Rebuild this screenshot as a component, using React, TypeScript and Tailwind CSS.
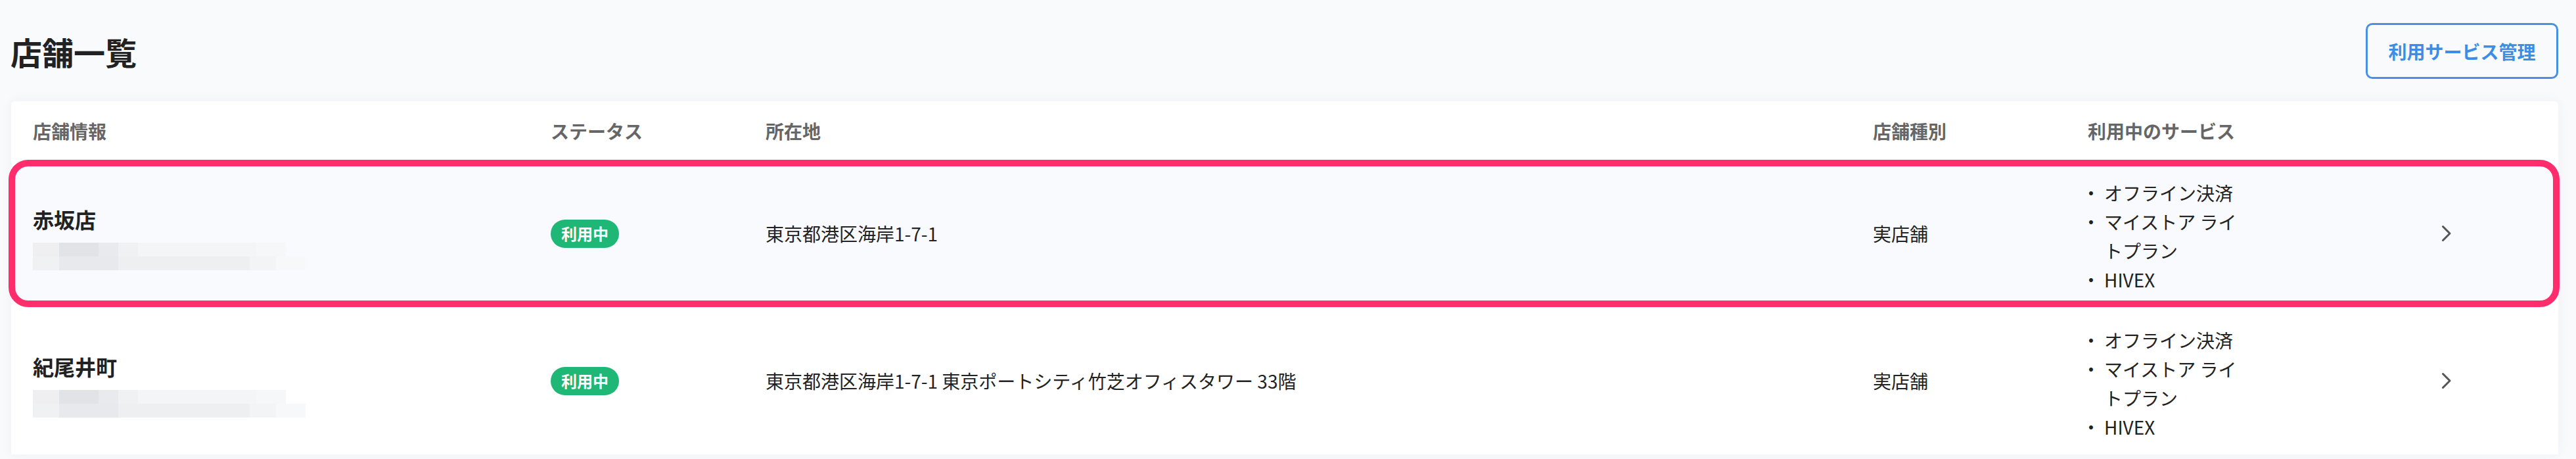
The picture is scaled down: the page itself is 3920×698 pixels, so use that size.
import React from "react";

type Store = {
  name: string;
  address: string;
  type: string;
  services: string[];
  selected: boolean;
};

const stores: Store[] = [
  {
    name: "赤坂店",
    address: "東京都港区海岸1-7-1",
    type: "実店舗",
    services: ["オフライン決済", "マイストア ライトプラン", "HIVEX"],
    selected: true,
  },
  {
    name: "紀尾井町",
    address: "東京都港区海岸1-7-1 東京ポートシティ竹芝オフィスタワー 33階",
    type: "実店舗",
    services: ["オフライン決済", "マイストア ライトプラン", "HIVEX"],
    selected: false,
  },
];

const cols =
  "grid grid-cols-[788px_327px_1685px_327px_538px_1fr] items-center pl-[33px]";

// pixelated (masked) sub text under the store name
const mosaicTop = [
  "w-[40px] bg-[#efeff2]",
  "w-[60px] bg-[#e2e3e6]",
  "w-[30px] bg-[#e9eaed]",
  "w-[30px] bg-[#f0f1f3]",
  "w-[180px] bg-[#f4f5f7]",
  "w-[45px] bg-[#f6f7f9]",
];
const mosaicBottom = [
  "w-[40px] bg-[#f0f1f3]",
  "w-[90px] bg-[#e8e9ec]",
  "w-[200px] bg-[#eeeff1]",
  "w-[40px] bg-[#f3f4f6]",
  "w-[45px] bg-[#f7f8fa]",
];

function Masked() {
  return (
    <div className="mt-[14px] flex h-[42px] w-[415px] flex-col">
      <div className="flex h-1/2">
        {mosaicTop.map((c, i) => (
          <div key={i} className={c} />
        ))}
      </div>
      <div className="flex h-1/2">
        {mosaicBottom.map((c, i) => (
          <div key={i} className={c} />
        ))}
      </div>
    </div>
  );
}

function Chevron() {
  return (
    <svg width="16" height="26" viewBox="0 0 16 26" fill="none">
      <path
        d="M2.5 2.5 L13 13 L2.5 23.5"
        stroke="#555"
        strokeWidth="3"
        strokeLinecap="round"
        strokeLinejoin="round"
      />
    </svg>
  );
}

function StoreRow({ store }: { store: Store }) {
  return (
    <div
      className={`relative h-[224px] ${cols} ${
        store.selected ? "rounded-[28px] bg-[#f9fafd]" : "bg-white"
      }`}
    >
      <div className="pt-[11px]">
        <div className="text-[32px] font-bold leading-[44px] text-[#222]">
          {store.name}
        </div>
        <Masked />
      </div>
      <div>
        <span className="inline-flex h-[43px] items-center rounded-full bg-[#1fb776] px-[16px] text-[24px] font-bold text-white">
          利用中
        </span>
      </div>
      <div className="text-[28px] text-[#222]">{store.address}</div>
      <div className="text-[28px] text-[#222]">{store.type}</div>
      <ul className="pt-[8px] text-[28px] leading-[44px] text-[#222]">
        {store.services.map((s) => (
          <li key={s} className="flex">
            <span className="-ml-[9px] w-[34px] shrink-0">・</span>
            <span className="w-[215px]">{s}</span>
          </li>
        ))}
      </ul>
      <div>
        <Chevron />
      </div>
      {store.selected && (
        <div className="pointer-events-none absolute -left-[4px] -right-[2px] top-0 bottom-0 rounded-[30px] border-[10px] border-[#ff2d6c]" />
      )}
    </div>
  );
}

export default function App() {
  return (
    <div className="min-h-screen bg-[#f9fafc] font-['Noto_Sans_CJK_JP','Noto_Sans',sans-serif]">
      <header className="flex items-center justify-between pl-[16px] pr-[27px] pt-[35px]">
        <h1 className="text-[48px] font-bold leading-none text-[#222]">店舗一覧</h1>
        <button className="h-[85px] w-[293px] rounded-[10px] border-[3px] border-[#4a90e2] text-[28px] font-bold text-[#3b8de6]">
          利用サービス管理
        </button>
      </header>

      <section className="ml-[17px] mr-[27px] mt-[34px] rounded-t-[6px] bg-white shadow-[0_0_18px_rgba(40,50,90,0.05)]">
        <div className={`h-[89px] text-[28px] font-bold text-[#666] ${cols}`}>
          <div>店舗情報</div>
          <div>ステータス</div>
          <div>所在地</div>
          <div>店舗種別</div>
          <div>利用中のサービス</div>
          <div />
        </div>
        {stores.map((s) => (
          <StoreRow key={s.name} store={s} />
        ))}
      </section>
    </div>
  );
}
